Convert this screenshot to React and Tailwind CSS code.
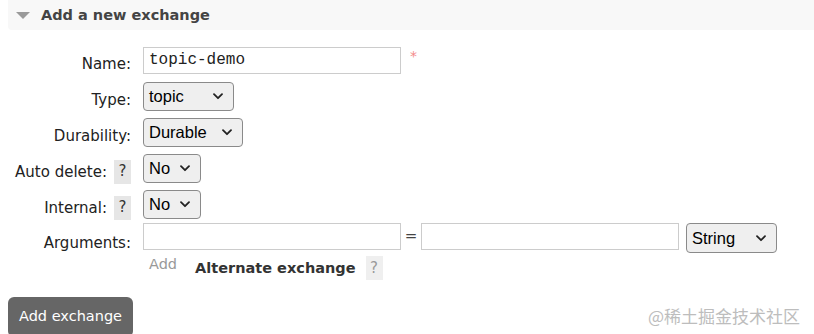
import React from 'react';

const sans = "font-['DejaVu_Sans','Verdana',sans-serif]";
const ctl = "font-['Liberation_Sans','Arial',sans-serif]";

const Chevron = () => (
  <svg width="10" height="7" viewBox="0 0 10 7" className="shrink-0">
    <path d="M1 1.2 L5 5.2 L9 1.2" fill="none" stroke="#222" strokeWidth="1.8" strokeLinecap="round" strokeLinejoin="round" />
  </svg>
);

const Select = ({ value, width, height = 'h-[29px]' }) => (
  <div className={`${width} ${height} ${ctl} flex items-center justify-between pl-[5px] pr-[10px] bg-[#efefef] border border-[#8a8a8a] rounded-[4px] text-[16.5px] text-black`}>
    <span>{value}</span>
    <Chevron />
  </div>
);

const Help = ({ faded }) => (
  <span className={`w-[17px] h-[24px] flex items-center justify-center text-[15px] ${faded ? 'bg-[#efefef] text-[#999]' : 'bg-[#e6e6e6] text-[#333]'}`}>?</span>
);

const Row = ({ label, help, children, className = 'h-[36px] items-center', labelClass = 'mt-[7px]' }) => (
  <div className={`flex ${className}`}>
    <div className={`w-[131px] flex justify-end items-center gap-[7px] ${labelClass}`}>
      <span className="text-[15px] leading-[18px] text-[#222]">{label}</span>
      {help && <Help />}
    </div>
    <div className="pl-[12px] flex items-center">{children}</div>
  </div>
);

export default function App() {
  return (
    <div className={`relative w-[814px] h-[334px] bg-white overflow-hidden ${sans}`}>
      <div className="ml-[8px] h-[30px] bg-[#f8f8f8] rounded-bl-[4px] flex items-center pl-[8px]">
        <svg width="14" height="7" viewBox="0 0 14 7">
          <path d="M0 0 L14 0 L7 7 Z" fill="#9a9a9a" />
        </svg>
        <span className="ml-[11px] mt-[1px] text-[14.5px] font-bold text-[#444]">Add a new exchange</span>
      </div>

      <div className="mt-[12px]">
        <Row label="Name:">
          <div className="w-[258px] h-[27px] border border-[#ccc] flex items-center pl-[5px] font-['Liberation_Mono','Courier_New',monospace] text-[16px] text-[#222]">
            topic-demo
          </div>
          <span className="ml-[9px] -mt-[8px] text-[14px] text-[#f48a8a]">*</span>
        </Row>
        <Row label="Type:">
          <Select value="topic" width="w-[91px]" />
        </Row>
        <Row label="Durability:">
          <Select value="Durable" width="w-[100px]" />
        </Row>
        <Row label="Auto delete:" help>
          <Select value="No" width="w-[58px]" />
        </Row>
        <Row label="Internal:" help>
          <Select value="No" width="w-[58px]" />
        </Row>
        <Row label="Arguments:" className="h-[32px] items-start" labelClass="mt-[12px]">
          <div className="mt-[1px] flex items-start">
            <div className="w-[258px] h-[27px] border border-[#ccc]" />
            <span className="w-[20px] h-[27px] flex items-center justify-center text-[15px] text-[#444]">=</span>
            <div className="w-[258px] h-[27px] border border-[#ccc]" />
            <div className="ml-[7px]">
              <Select value="String" width="w-[91px]" height="h-[30px]" />
            </div>
          </div>
        </Row>
        <div className="flex h-[28px] items-center pl-[149px]">
          <span className="-mt-[6px] text-[14.5px] text-[#999]">Add</span>
          <span className="ml-[18px] mt-[1px] text-[14.5px] font-bold text-[#333]">Alternate exchange</span>
          <span className="ml-[10px]"><Help faded /></span>
        </div>
      </div>

      <button className="mt-[15px] ml-[8px] h-[40px] px-[11px] pb-[1px] bg-[#666] rounded-[6px] text-white text-[14.5px]">
        Add exchange
      </button>

      <div className="absolute left-[648px] top-[305px] text-[17px] text-[#bdbdbd] font-['Noto_Sans_CJK_SC',sans-serif] leading-[22px]">
        @稀土掘金技术社区
      </div>
    </div>
  );
}
